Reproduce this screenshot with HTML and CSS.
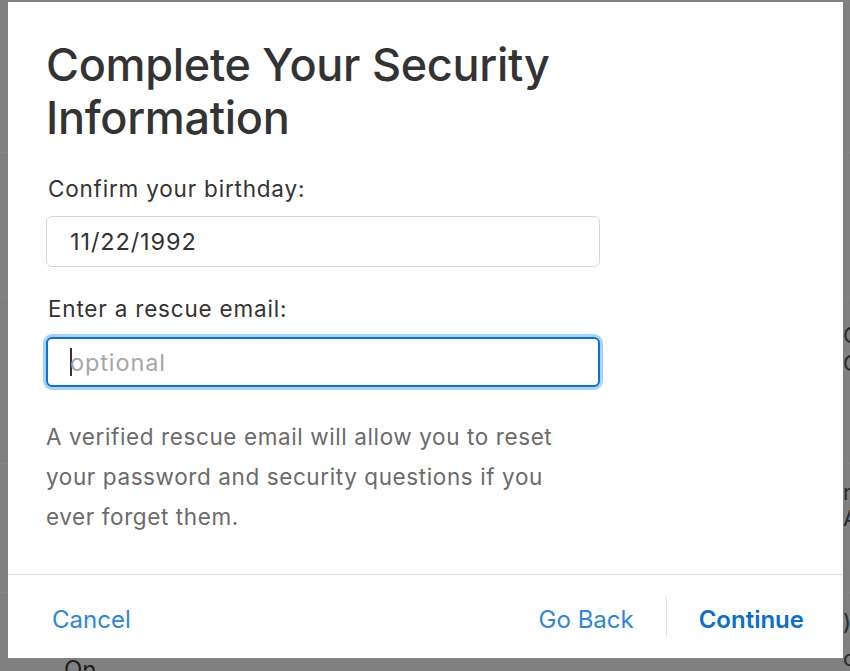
FILE: index.html
```html
<!doctype html>
<html lang="en">

<head>
    <meta charset="UTF-8">
    <title>Complete Your Security Information</title>
    <link rel="stylesheet" href="styles.css">
</head>

<body>
    <div class="page">
        <div class="page_row row1"></div>
        <div class="page_row row2"></div>
        <div class="page_row row3"><span class="peek">O</span><span class="peek">O</span></div>
        <div class="page_row row4"><span class="peek">n</span><span class="peek">A</span></div>
        <div class="page_foot">
            <span class="foot_text">On</span>
            <div class="foot_peeks"><span class="peek">)</span><span class="peek">c</span></div>
        </div>
    </div>

    <div class="modal">
        <div class="modal_body">
            <h1 class="title">Complete Your Security Information</h1>

            <label class="field_label" for="birthday">Confirm your birthday:</label>
            <input type="text" id="birthday" class="field" value="11/22/1992">

            <label class="field_label" for="rescue">Enter a rescue email:</label>
            <div class="field field_focus"><span class="caret"></span>optional</div>

            <p class="note">A verified rescue email will allow you to reset your password and security questions if you ever forget them.</p>
        </div>
        <div class="modal_foot">
            <a href="#" class="btn">Cancel</a>
            <div class="btn_group">
                <a href="#" class="btn">Go Back</a>
                <span class="btn_sep"></span>
                <a href="#" class="btn btn_main">Continue</a>
            </div>
        </div>
    </div>
</body>

</html>
```

FILE: styles.css
```css
* {
    margin: 0;
    padding: 0;
    box-sizing: border-box;
}

html,
body {
    width: 850px;
    height: 671px;
    overflow: hidden;
}

body {
    background-color: #808080;
    font-family: Inter, "Noto Sans", sans-serif;
    color: #333;
    position: relative;
}

a {
    text-decoration: none;
}

/* dimmed page behind the dialog */
.page {
    height: 671px;
    display: flex;
    flex-direction: column;
    overflow: hidden;
}

.page_row {
    flex-shrink: 0;
    border-bottom: 1px solid #858585;
    display: flex;
    flex-direction: column;
    align-items: flex-end;
}

.row1 {
    height: 153px;
}

.row2 {
    height: 145px;
}

.row3 {
    height: 166px;
    padding-top: 26px;
    gap: 6px;
}

.row4 {
    height: 129px;
    padding-top: 17px;
    gap: 4px;
}

.peek {
    font-size: 22px;
    line-height: 22px;
    color: #2a2a2a;
    margin-right: -10px;
    width: 17px;
}

.page_foot {
    flex: 1;
    min-height: 0;
    display: flex;
    justify-content: space-between;
    align-items: flex-start;
}

.foot_text {
    margin: 65px 0 0 64px;
    font-size: 24px;
    line-height: 24px;
    color: #1e1e1e;
}

.foot_peeks {
    padding-top: 18px;
    display: flex;
    flex-direction: column;
    gap: 14px;
}

/* dialog */
.modal {
    position: absolute;
    top: 2px;
    left: 8px;
    width: 835px;
    height: 656px;
    background-color: #fff;
    display: flex;
    flex-direction: column;
}

.modal_body {
    flex: 1;
    padding: 36px 38px 0 38px;
    display: flex;
    flex-direction: column;
    align-items: flex-start;
}

.title {
    font-size: 45px;
    line-height: 53px;
    font-weight: 500;
    letter-spacing: -0.3px;
    color: #333;
    width: 560px;
}

.field_label {
    margin: 31px 0 0 2px;
    font-size: 22.5px;
    line-height: 28px;
    letter-spacing: 0.8px;
    color: #333;
}

.field {
    margin-top: 13px;
    width: 554px;
    height: 51px;
    border: 1px solid #d6d6d6;
    border-radius: 6px;
    padding: 0 23px;
    font-family: Inter, "Noto Sans", sans-serif;
    font-size: 23.5px;
    letter-spacing: 0.9px;
    color: #333;
    background: #fff;
    outline: none;
}

.field + .field_label {
    margin-top: 28px;
}

.field_focus {
    margin-top: 14px;
    height: 50px;
    border: 2px solid #0a74d2;
    box-shadow: 0 0 0 3px #a9d2f7;
    display: flex;
    align-items: center;
    padding-left: 22px;
    color: #a6a6a6;
}

.caret {
    width: 2px;
    height: 28px;
    background-color: #333;
    margin-right: -2px;
}

.note {
    margin-top: 30px;
    width: 545px;
    font-size: 22.5px;
    line-height: 40px;
    letter-spacing: 0.6px;
    color: #6b6b6b;
}

.modal_foot {
    height: 84px;
    border-top: 1px solid #e0e0e0;
    display: flex;
    align-items: center;
    justify-content: space-between;
    padding: 6px 39px 0 44px;
}

.btn {
    font-size: 24px;
    color: #2e86d7;
}

.btn_group {
    display: flex;
    align-items: center;
}

.btn_sep {
    width: 1px;
    height: 40px;
    background-color: #e2e2e2;
    margin: -6px 32px 0 32px;
}

.btn_main {
    font-weight: 600;
    color: #0a6fc8;
}
```
